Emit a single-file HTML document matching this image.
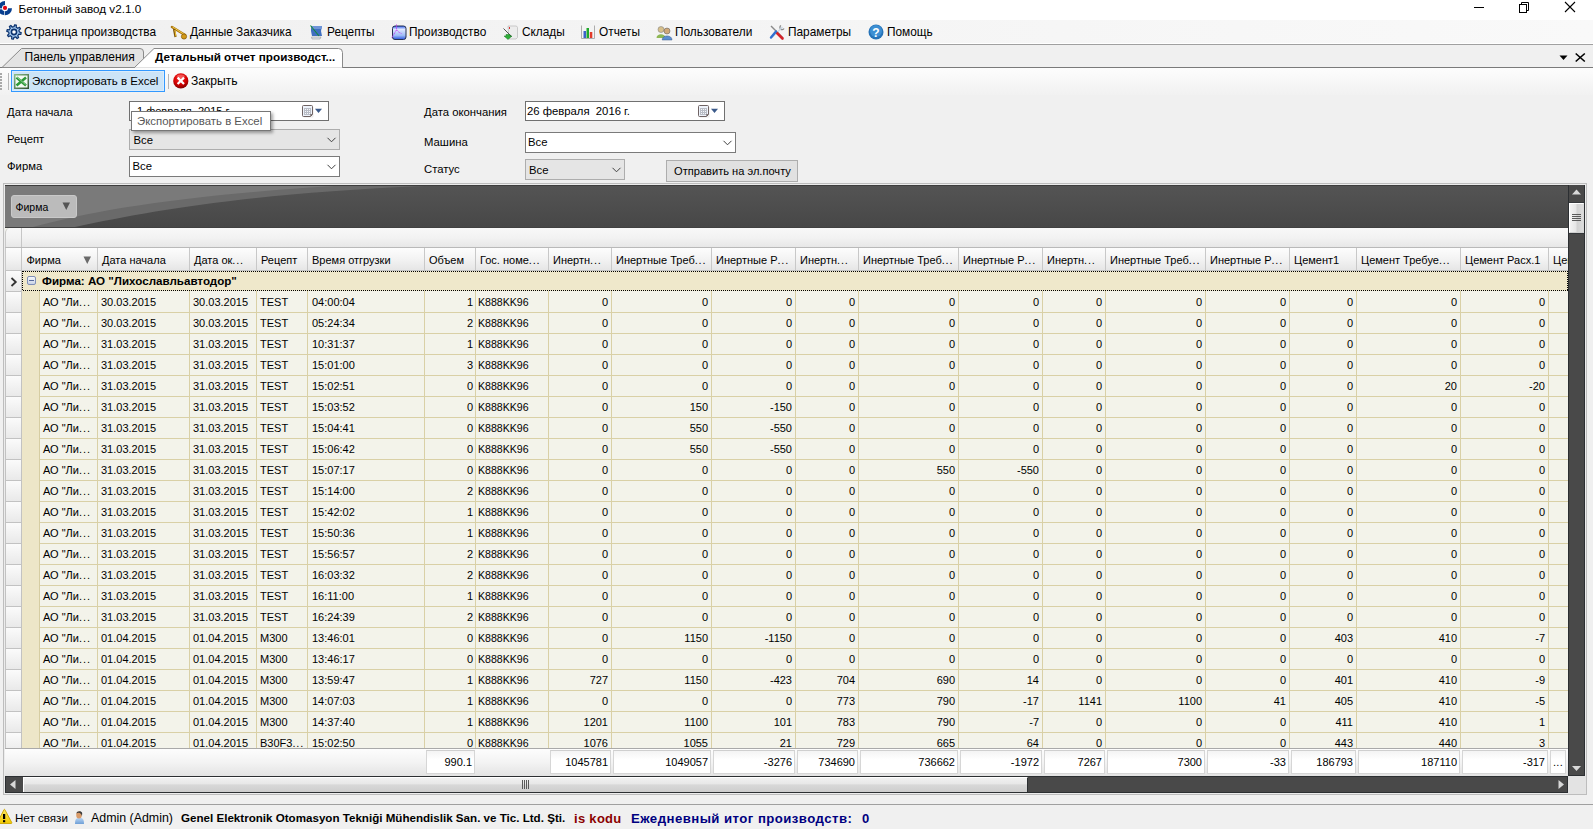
<!DOCTYPE html><html><head><meta charset="utf-8"><style>
html,body{margin:0;padding:0;}
body{width:1593px;height:829px;overflow:hidden;position:relative;background:#f0f0f0;font-family:"Liberation Sans", sans-serif;}
.t{position:absolute;white-space:pre;line-height:1;}
.b{position:absolute;box-sizing:border-box;}
svg{position:absolute;overflow:visible;}

</style></head><body>
<div class="b" style="left:0px;top:0px;width:1593px;height:20px;background:#fff"></div>
<svg style="left:0;top:0" width="14" height="17" viewBox="0 0 14 17">
<path d="M5 1 A7 7 0 0 0 -2 8 L2 8 A3 3 0 0 1 5 5 Z" fill="#083f8f"/>
<path d="M12 8.2 A7 7 0 0 1 5 15.2 L5 11.2 A3 3 0 0 0 8 8.2 Z" fill="#083f8f"/>
<path d="M4 15.1 A7 7 0 0 1 -2 9.2 L2 9.2 A3 3 0 0 0 4 11 Z" fill="#083f8f"/>
<rect x="0" y="8" width="2" height="1.2" fill="#a9bcd6"/><rect x="4" y="11" width="1" height="4.2" fill="#a9bcd6"/>
<circle cx="5" cy="7.9" r="2.1" fill="#e30613"/>
</svg>
<div class="t" style="left:18.5px;top:3px;font-size:11.7px;font-weight:400;color:#000;">Бетонный завод v2.1.0</div>
<div class="b" style="left:1474px;top:7px;width:10px;height:1px;background:#000"></div>
<svg style="left:1518px;top:1px" width="12" height="12"><rect x="1.5" y="3.5" width="7" height="8" fill="none" stroke="#000" stroke-width="1"/><path d="M3.5 3.5 V1.5 H10.5 V9.5 H8.5" fill="none" stroke="#000" stroke-width="1"/></svg>
<svg style="left:1564px;top:1px" width="12" height="12"><path d="M1 1 L11 11 M11 1 L1 11" stroke="#000" stroke-width="1.1"/></svg>
<div class="b" style="left:0px;top:20px;width:1593px;height:24px;background:linear-gradient(90deg,#f0f0f0,#f9f9f9)"></div>
<div class="b" style="left:0px;top:43px;width:1593px;height:1px;background:#ffffff"></div>
<div class="b" style="left:0px;top:44px;width:1593px;height:1px;background:#a0a0a0"></div>
<div class="t" style="left:24px;top:27px;font-size:11.85px;font-weight:400;color:#000;">Страница производства</div>
<div class="t" style="left:190px;top:27px;font-size:11.85px;font-weight:400;color:#000;">Данные Заказчика</div>
<div class="t" style="left:327px;top:27px;font-size:11.85px;font-weight:400;color:#000;">Рецепты</div>
<div class="t" style="left:409px;top:27px;font-size:11.85px;font-weight:400;color:#000;">Производство</div>
<div class="t" style="left:522px;top:27px;font-size:11.85px;font-weight:400;color:#000;">Склады</div>
<div class="t" style="left:599px;top:27px;font-size:11.85px;font-weight:400;color:#000;">Отчеты</div>
<div class="t" style="left:675px;top:27px;font-size:11.85px;font-weight:400;color:#000;">Пользователи</div>
<div class="t" style="left:788px;top:27px;font-size:11.85px;font-weight:400;color:#000;">Параметры</div>
<div class="t" style="left:887px;top:27px;font-size:11.85px;font-weight:400;color:#000;">Помощь</div>
<svg style="left:6px;top:24px" width="16" height="16" viewBox="0 0 16 16">
<path d="M13.30 8.00 L15.17 8.68 L14.81 10.33 L12.83 10.18 L11.75 11.75 L12.59 13.55 L11.17 14.47 L9.87 12.96 L8.00 13.30 L7.32 15.17 L5.67 14.81 L5.82 12.83 L4.25 11.75 L2.45 12.59 L1.53 11.17 L3.04 9.87 L2.70 8.00 L0.83 7.32 L1.19 5.67 L3.17 5.82 L4.25 4.25 L3.41 2.45 L4.83 1.53 L6.13 3.04 L8.00 2.70 L8.68 0.83 L10.33 1.19 L10.18 3.17 L11.75 4.25 L13.55 3.41 L14.47 4.83 L12.96 6.13 Z" fill="#a8cdf3" stroke="#0d3470" stroke-width="1.3" stroke-linejoin="round"/>
<circle cx="8" cy="8" r="2.6" fill="#fff" stroke="#0d3470" stroke-width="1.6"/>
</svg>
<svg style="left:171px;top:25px" width="16" height="16" viewBox="0 0 16 16">
<path d="M1 2 L14 10" stroke="#a8730f" stroke-width="2.6" stroke-linecap="round"/><path d="M1.5 2 L13.5 9.5" stroke="#f5d04a" stroke-width="1"/>
<path d="M3 4 L4.5 12" stroke="#7a520a" stroke-width="2.2"/><path d="M3.8 5 L5 11.5" stroke="#f2c230" stroke-width="1"/>
<circle cx="13" cy="11.5" r="2.6" fill="#d39a18" stroke="#8a5e0c" stroke-width="0.8"/>
</svg>
<svg style="left:310px;top:25px" width="14" height="15" viewBox="0 0 14 15">
<path d="M1 1 L12 1 L11 6 L12 11 L2 11 L1 6 Z" fill="#3f6fc0"/><path d="M1 1 L12 1 L11.5 4 L2 4 Z" fill="#6d94d8"/>
<path d="M1.5 12 L11 12 L10 14 L2 14 Z" fill="#dfe3ea" stroke="#888" stroke-width="0.5"/>
<path d="M0.5 0.5 L9 11" stroke="#138a3a" stroke-width="1.1"/>
</svg>
<svg style="left:391px;top:24px" width="16" height="17" viewBox="0 0 16 17">
<defs><linearGradient id="pg" x1="0" y1="0" x2="0" y2="1"><stop offset="0" stop-color="#2a5cf0"/><stop offset="0.25" stop-color="#dfe8ff"/><stop offset="0.7" stop-color="#9dbbf5"/><stop offset="1" stop-color="#2a55e0"/></linearGradient></defs>
<rect x="1.5" y="2" width="13.5" height="13.5" rx="2.5" fill="url(#pg)" stroke="#27314f" stroke-width="1"/>
<path d="M5.5 0.5 V5 Q6.5 8 10.5 9.5 M5.5 6 L0.5 14" stroke="#c437f0" stroke-width="0.9" stroke-dasharray="1.2 0.6" fill="none"/>
</svg>
<svg style="left:503px;top:25px" width="16" height="16" viewBox="0 0 16 16">
<path d="M5 1 L13.5 1 L14.5 2.5 L14.5 12.5 L13 14 L6 14 Z" fill="#ececec" stroke="#b9b9b9" stroke-width="0.7"/>
<path d="M0.5 3.5 L8.5 11.5" stroke="#555" stroke-width="1"/>
<path d="M3 9.5 L7 9.5 L7 11 L9 11 L5 14.5 L1 11 L3 11 Z" fill="#2fae3a" stroke="#1b7a22" stroke-width="0.5"/>
<rect x="6" y="2" width="1" height="2" fill="#d33"/>
</svg>
<svg style="left:581px;top:25px" width="14" height="15" viewBox="0 0 14 15">
<path d="M0.5 0.5 L0.5 13.5 L13.5 13.5 M13.5 0.5 L13.5 13.5" stroke="#999" stroke-width="0.8" fill="none"/>
<rect x="2.5" y="6" width="2.5" height="7" fill="#3a62c9"/><rect x="5.5" y="3" width="2.5" height="10" fill="#1fa82a"/><rect x="8.8" y="7" width="2.5" height="6" fill="#e23a2a"/>
</svg>
<svg style="left:656px;top:25px" width="17" height="16" viewBox="0 0 17 16">
<circle cx="5" cy="4.5" r="3" fill="#d7c08b" stroke="#777" stroke-width="0.5"/><path d="M0.5 13 C0.5 8 9.5 8 9.5 13 Z" fill="#8fb856"/>
<circle cx="11" cy="6" r="3" fill="#d0a878" stroke="#555" stroke-width="0.5"/><path d="M6.2 15 C6.2 9.5 16 9.5 16 15 Z" fill="#5b8fd0" stroke="#3d5c8f" stroke-width="0.5"/>
</svg>
<svg style="left:769px;top:24px" width="17" height="17" viewBox="0 0 17 17">
<path d="M2 2 L14 14" stroke="#8a8a8a" stroke-width="1.4"/><path d="M12 1.5 A2.2 2.2 0 1 0 15 4.5" stroke="#8a8a8a" stroke-width="1.3" fill="none"/>
<path d="M13.5 3 L3 13.5" stroke="#c9d7e6" stroke-width="1.2"/>
<path d="M8 9 L13.5 14.5" stroke="#d4232a" stroke-width="2.6" stroke-linecap="round"/>
<path d="M7 7.5 L2 13.5" stroke="#2f6fd0" stroke-width="2.4" stroke-linecap="round"/>
</svg>
<svg style="left:868px;top:24px" width="16" height="16" viewBox="0 0 16 16">
<circle cx="8" cy="8" r="7.5" fill="#2673b8"/><circle cx="8" cy="7" r="6" fill="#3d8fd3"/>
<text x="8" y="12.5" font-family="Liberation Sans" font-weight="700" font-size="12" fill="#fff" text-anchor="middle">?</text>
</svg>
<div class="b" style="left:0px;top:67px;width:1593px;height:1px;background:#7a7a7a"></div>
<svg style="left:0;top:45px" width="360" height="24" viewBox="0 0 360 24">
<path d="M2 22.5 L21.5 3.5 L140 3.5 Q143.5 3.5 143.5 7 L143.5 22.5 Z" fill="#e3e3e3" stroke="#8a8a8a" stroke-width="1"/>
<path d="M134 23 L154 3.5 L338.5 3.5 Q342.5 3.5 342.5 7.5 L342.5 23 Z" fill="#fff" stroke="#8a8a8a" stroke-width="1"/>
<rect x="135" y="22.5" width="207" height="2" fill="#fff"/>
</svg>
<div class="t" style="left:24.5px;top:51px;font-size:12.0px;font-weight:400;color:#000;">Панель управления</div>
<div class="t" style="left:155px;top:51px;font-size:11.7px;font-weight:700;color:#000;">Детальный отчет производст...</div>
<svg style="left:1559px;top:55px" width="10" height="6"><path d="M0.5 0.5 L8.5 0.5 L4.5 5 Z" fill="#000"/></svg>
<svg style="left:1575px;top:53px" width="11" height="9"><path d="M0.7 0.5 L9.8 8.5 M9.8 0.5 L0.7 8.5" stroke="#000" stroke-width="1.6"/></svg>
<div class="b" style="left:0px;top:68px;width:1593px;height:27px;background:linear-gradient(#fdfdfd,#f1f1f1)"></div>
<div class="b" style="left:0px;top:73px;width:2px;height:2px;background:#a9a9a9"></div>
<div class="b" style="left:0px;top:76px;width:2px;height:2px;background:#a9a9a9"></div>
<div class="b" style="left:0px;top:79px;width:2px;height:2px;background:#a9a9a9"></div>
<div class="b" style="left:0px;top:82px;width:2px;height:2px;background:#a9a9a9"></div>
<div class="b" style="left:0px;top:85px;width:2px;height:2px;background:#a9a9a9"></div>
<div class="b" style="left:0px;top:88px;width:2px;height:2px;background:#a9a9a9"></div>
<div class="b" style="left:8px;top:73px;width:1px;height:17px;background:#b8b8b8"></div>
<div class="b" style="left:11px;top:70px;width:154px;height:22px;background:#cce4f7;border:1px solid #3399ff"></div>
<div class="b" style="left:12px;top:71px;width:152px;height:20px;border:1px solid #daecfb"></div>
<svg style="left:14px;top:74px" width="16" height="16" viewBox="0 0 16 16">
<defs><linearGradient id="xb" x1="0" y1="0" x2="1" y2="1"><stop offset="0" stop-color="#8cc08c"/><stop offset="1" stop-color="#2f4f2f"/></linearGradient></defs>
<rect x="0" y="0" width="15" height="15" fill="url(#xb)"/>
<rect x="1.5" y="1.5" width="12" height="12" fill="#f4faf4"/>
<path d="M2.5 3.5 L12 11.5 M12 3.5 L2.5 11.5" stroke="#2e9a3a" stroke-width="2.6"/>
<path d="M3 3.2 L11.5 10.5" stroke="#9ed69e" stroke-width="0.8"/>
</svg>
<div class="t" style="left:32px;top:76px;font-size:11.5px;font-weight:400;color:#000;">Экспортировать в Excel</div>
<div class="b" style="left:168px;top:74px;width:1px;height:15px;background:#b5b5b5"></div>
<svg style="left:172.5px;top:73px" width="16" height="16" viewBox="0 0 16 16">
<defs><radialGradient id="rg" cx="0.45" cy="0.3" r="0.75"><stop offset="0" stop-color="#ff2a2a"/><stop offset="0.6" stop-color="#d00000"/><stop offset="1" stop-color="#700000"/></radialGradient></defs>
<circle cx="7.8" cy="7.9" r="7.6" fill="url(#rg)"/>
<ellipse cx="7.8" cy="3.5" rx="4" ry="2" fill="#fff" opacity="0.25"/>
<path d="M4.6 4.6 L11 11 M11 4.6 L4.6 11" stroke="#fff" stroke-width="2.2"/>
</svg>
<div class="t" style="left:191px;top:75px;font-size:12.1px;font-weight:400;color:#000;">Закрыть</div>
<div class="t" style="left:7px;top:107px;font-size:11.3px;font-weight:400;color:#000;">Дата начала</div>
<div class="t" style="left:7px;top:134px;font-size:11.3px;font-weight:400;color:#000;">Рецепт</div>
<div class="t" style="left:7px;top:161px;font-size:11.3px;font-weight:400;color:#000;">Фирма</div>
<div class="t" style="left:424px;top:107px;font-size:11.3px;font-weight:400;color:#000;">Дата окончания</div>
<div class="t" style="left:424px;top:137px;font-size:11.3px;font-weight:400;color:#000;">Машина</div>
<div class="t" style="left:424px;top:164px;font-size:11.3px;font-weight:400;color:#000;">Статус</div>
<div class="b" style="left:129px;top:101px;width:200px;height:20px;background:#fff;border:1px solid #707070"></div>
<div class="t" style="left:137px;top:106px;font-size:11px;font-weight:400;color:#000;">1 февраля  2015 г.</div>
<svg style="left:302px;top:105px" width="22" height="14" viewBox="0 0 22 14">
<rect x="1.5" y="1.5" width="10" height="11" rx="1" fill="#000" opacity="0.08"/>
<path d="M1.5 0.5 H9.5 Q10.5 0.5 10.5 1.5 V9.5 L8.5 11.5 H1.5 Q0.5 11.5 0.5 10.5 V1.5 Q0.5 0.5 1.5 0.5 Z" fill="#eef3fb" stroke="#6f6363" stroke-width="1"/>
<rect x="2" y="3" width="7" height="7" fill="#b9bdc6"/>
<rect x="3" y="4" width="1" height="1" fill="#f4f6fa"/><rect x="5" y="4" width="1" height="1" fill="#f4f6fa"/><rect x="7" y="4" width="1" height="1" fill="#f4f6fa"/><rect x="3" y="6" width="1" height="1" fill="#f4f6fa"/><rect x="5" y="6" width="1" height="1" fill="#f4f6fa"/><rect x="7" y="6" width="1" height="1" fill="#f4f6fa"/><rect x="3" y="8" width="1" height="1" fill="#f4f6fa"/><rect x="5" y="8" width="1" height="1" fill="#f4f6fa"/><rect x="7" y="8" width="1" height="1" fill="#f4f6fa"/>
<path d="M8 11.5 L10.5 9 L8.5 9 Z" fill="#6f6363"/>
<path d="M13 3.8 L20 3.8 L16.5 8 Z" fill="#3b5a8a"/>
</svg>
<div class="b" style="left:525px;top:101px;width:200px;height:20px;background:#fff;border:1px solid #707070"></div>
<div class="t" style="left:527px;top:106px;font-size:11.3px;font-weight:400;color:#000;">26 февраля  2016 г.</div>
<svg style="left:698px;top:105px" width="22" height="14" viewBox="0 0 22 14">
<rect x="1.5" y="1.5" width="10" height="11" rx="1" fill="#000" opacity="0.08"/>
<path d="M1.5 0.5 H9.5 Q10.5 0.5 10.5 1.5 V9.5 L8.5 11.5 H1.5 Q0.5 11.5 0.5 10.5 V1.5 Q0.5 0.5 1.5 0.5 Z" fill="#eef3fb" stroke="#6f6363" stroke-width="1"/>
<rect x="2" y="3" width="7" height="7" fill="#b9bdc6"/>
<rect x="3" y="4" width="1" height="1" fill="#f4f6fa"/><rect x="5" y="4" width="1" height="1" fill="#f4f6fa"/><rect x="7" y="4" width="1" height="1" fill="#f4f6fa"/><rect x="3" y="6" width="1" height="1" fill="#f4f6fa"/><rect x="5" y="6" width="1" height="1" fill="#f4f6fa"/><rect x="7" y="6" width="1" height="1" fill="#f4f6fa"/><rect x="3" y="8" width="1" height="1" fill="#f4f6fa"/><rect x="5" y="8" width="1" height="1" fill="#f4f6fa"/><rect x="7" y="8" width="1" height="1" fill="#f4f6fa"/>
<path d="M8 11.5 L10.5 9 L8.5 9 Z" fill="#6f6363"/>
<path d="M13 3.8 L20 3.8 L16.5 8 Z" fill="#3b5a8a"/>
</svg>
<div class="b" style="left:129px;top:129px;width:211px;height:21px;background:#e5e5e5;border:1px solid #adadad"></div>
<div class="t" style="left:133.5px;top:135px;font-size:11.3px;font-weight:400;color:#000;">Все</div>
<svg style="left:327px;top:137px" width="10" height="6"><path d="M0.5 0.8 L4.5 4.8 L8.5 0.8" fill="none" stroke="#404040" stroke-width="1"/></svg>
<div class="b" style="left:129px;top:156px;width:211px;height:21px;background:#fff;border:1px solid #7a7a7a"></div>
<div class="t" style="left:132.5px;top:161px;font-size:11.3px;font-weight:400;color:#000;">Все</div>
<svg style="left:327px;top:164px" width="10" height="6"><path d="M0.5 0.8 L4.5 4.8 L8.5 0.8" fill="none" stroke="#404040" stroke-width="1"/></svg>
<div class="b" style="left:525px;top:132px;width:211px;height:21px;background:#fff;border:1px solid #7a7a7a"></div>
<div class="t" style="left:528px;top:137px;font-size:11.3px;font-weight:400;color:#000;">Все</div>
<svg style="left:723px;top:140px" width="10" height="6"><path d="M0.5 0.8 L4.5 4.8 L8.5 0.8" fill="none" stroke="#404040" stroke-width="1"/></svg>
<div class="b" style="left:525px;top:159px;width:100px;height:21px;background:#e5e5e5;border:1px solid #adadad"></div>
<div class="t" style="left:529px;top:165px;font-size:11.3px;font-weight:400;color:#000;">Все</div>
<svg style="left:612px;top:167px" width="10" height="6"><path d="M0.5 0.8 L4.5 4.8 L8.5 0.8" fill="none" stroke="#404040" stroke-width="1"/></svg>
<div class="b" style="left:666px;top:160px;width:132px;height:22px;background:#e1e1e1;border:1px solid #adadad"></div>
<div class="t" style="left:674px;top:166px;font-size:11.1px;font-weight:400;color:#000;">Отправить на эл.почту</div>
<div class="b" style="left:131px;top:111px;width:140px;height:20px;background:#fff;border:1px solid #767676;box-shadow:2px 2px 3px rgba(0,0,0,0.35)"></div>
<div class="t" style="left:137px;top:116px;font-size:11.4px;font-weight:400;color:#575757;">Экспортировать в Excel</div>
<div class="b" style="left:3px;top:183px;width:1584px;height:612px;border:1px solid #bdbdbd;background:#f0f0f0"></div>
<div class="b" style="left:4px;top:184px;width:1582px;height:610px;background:#ececec"></div>
<div class="b" style="left:5px;top:185px;width:1563px;height:43px;background:linear-gradient(#545454,#474747);border-top:1px solid #3e3e3e;border-bottom:1px solid #404040"></div>
<svg style="left:5px;top:185px" width="1563" height="43" viewBox="0 0 1563 43">
<path d="M0 1 L420 1 C250 8 150 25 70 42 L0 42 Z" fill="#6a6a6a"/>
<path d="M0 1 L330 1 C180 10 90 25 28 42 L0 42 Z" fill="#7a7a7a"/>
</svg>
<div class="b" style="left:11px;top:195px;width:66px;height:23px;background:#bbbbbb;border:1px solid #c9c9c9;border-radius:3px"></div>
<div class="t" style="left:15.5px;top:202px;font-size:10.5px;font-weight:400;color:#000;">Фирма</div>
<svg style="left:62px;top:202px" width="9" height="9"><path d="M0.5 0.5 L8 0.5 L4.25 8 Z" fill="#555"/></svg>
<div class="b" style="left:1568px;top:185px;width:17px;height:591px;background:#494949;border:1px solid #2c2f32;border-top:none"></div>
<svg style="left:1571px;top:188px" width="12" height="8"><path d="M1 6.5 L5.5 1.5 L10 6.5 Z" fill="#d8d8d8"/></svg>
<div class="b" style="left:1569px;top:202px;width:15px;height:1px;background:#35383b"></div>
<div class="b" style="left:1569px;top:203px;width:15px;height:30px;background:linear-gradient(90deg,#f3f3f3,#e6e6e6 45%,#d2d2d2 55%,#dcdcdc);border:1px solid #fff;border-right-color:#d8d8d8;border-bottom-color:#d0d0d0"></div>
<div class="b" style="left:1569px;top:233px;width:15px;height:1px;background:#35383b"></div>
<div class="b" style="left:1572px;top:214px;width:9px;height:1px;background:#5a5a5a"></div>
<div class="b" style="left:1572px;top:216px;width:9px;height:1px;background:#5a5a5a"></div>
<div class="b" style="left:1572px;top:218px;width:9px;height:1px;background:#5a5a5a"></div>
<div class="b" style="left:1572px;top:220px;width:9px;height:1px;background:#5a5a5a"></div>
<svg style="left:1571px;top:765px" width="12" height="8"><path d="M1 1 L10 1 L5.5 6 Z" fill="#d8d8d8"/></svg>
<div class="b" style="left:5px;top:228px;width:1563px;height:548px;overflow:hidden;background:#f3f3ea">
<div class="b" style="left:0px;top:0px;width:1563px;height:20px;background:linear-gradient(#f8f8f8,#f2f2f2 50%,#e6e6e6);border-top-left-radius:5px;border-left:1px solid #c9c9c9"></div>
<div class="b" style="left:16px;top:0px;width:1px;height:20px;background:#c6c6c6"></div>
<div class="b" style="left:0px;top:19px;width:1563px;height:1px;background:#b9b9b9"></div>
<div class="b" style="left:0px;top:20px;width:1563px;height:22px;background:linear-gradient(#fdfdfd,#f3f3f3 50%,#e6e6e6)"></div>
<div class="b" style="left:0px;top:20px;width:1px;height:22px;background:#c9c9c9"></div>
<div class="b" style="left:16px;top:20px;width:1px;height:22px;background:#c6c6c6"></div>
<div class="b" style="left:92px;top:20px;width:1px;height:22px;background:#c8c8c8"></div>
<div class="t" style="left:21.5px;top:27px;font-size:11px;font-weight:400;color:#000;">Фирма</div>
<div class="b" style="left:184px;top:20px;width:1px;height:22px;background:#c8c8c8"></div>
<div class="t" style="left:97px;top:27px;font-size:11px;font-weight:400;color:#000;">Дата начала</div>
<div class="b" style="left:251px;top:20px;width:1px;height:22px;background:#c8c8c8"></div>
<div class="t" style="left:189px;top:27px;font-size:11px;font-weight:400;color:#000;">Дата ок<span style="letter-spacing:0.8px">...</span></div>
<div class="b" style="left:302px;top:20px;width:1px;height:22px;background:#c8c8c8"></div>
<div class="t" style="left:256px;top:27px;font-size:11px;font-weight:400;color:#000;">Рецепт</div>
<div class="b" style="left:419px;top:20px;width:1px;height:22px;background:#c8c8c8"></div>
<div class="t" style="left:307px;top:27px;font-size:11px;font-weight:400;color:#000;">Время отгрузки</div>
<div class="b" style="left:470px;top:20px;width:1px;height:22px;background:#c8c8c8"></div>
<div class="t" style="left:424px;top:27px;font-size:11px;font-weight:400;color:#000;">Объем</div>
<div class="b" style="left:543px;top:20px;width:1px;height:22px;background:#c8c8c8"></div>
<div class="t" style="left:475px;top:27px;font-size:11px;font-weight:400;color:#000;">Гос. номе<span style="letter-spacing:0.8px">...</span></div>
<div class="b" style="left:606px;top:20px;width:1px;height:22px;background:#c8c8c8"></div>
<div class="t" style="left:548px;top:27px;font-size:11px;font-weight:400;color:#000;">Инертн<span style="letter-spacing:0.8px">...</span></div>
<div class="b" style="left:706px;top:20px;width:1px;height:22px;background:#c8c8c8"></div>
<div class="t" style="left:611px;top:27px;font-size:11px;font-weight:400;color:#000;">Инертные Треб<span style="letter-spacing:0.8px">...</span></div>
<div class="b" style="left:790px;top:20px;width:1px;height:22px;background:#c8c8c8"></div>
<div class="t" style="left:711px;top:27px;font-size:11px;font-weight:400;color:#000;">Инертные Р<span style="letter-spacing:0.8px">...</span></div>
<div class="b" style="left:853px;top:20px;width:1px;height:22px;background:#c8c8c8"></div>
<div class="t" style="left:795px;top:27px;font-size:11px;font-weight:400;color:#000;">Инертн<span style="letter-spacing:0.8px">...</span></div>
<div class="b" style="left:953px;top:20px;width:1px;height:22px;background:#c8c8c8"></div>
<div class="t" style="left:858px;top:27px;font-size:11px;font-weight:400;color:#000;">Инертные Треб<span style="letter-spacing:0.8px">...</span></div>
<div class="b" style="left:1037px;top:20px;width:1px;height:22px;background:#c8c8c8"></div>
<div class="t" style="left:958px;top:27px;font-size:11px;font-weight:400;color:#000;">Инертные Р<span style="letter-spacing:0.8px">...</span></div>
<div class="b" style="left:1100px;top:20px;width:1px;height:22px;background:#c8c8c8"></div>
<div class="t" style="left:1042px;top:27px;font-size:11px;font-weight:400;color:#000;">Инертн<span style="letter-spacing:0.8px">...</span></div>
<div class="b" style="left:1200px;top:20px;width:1px;height:22px;background:#c8c8c8"></div>
<div class="t" style="left:1105px;top:27px;font-size:11px;font-weight:400;color:#000;">Инертные Треб<span style="letter-spacing:0.8px">...</span></div>
<div class="b" style="left:1284px;top:20px;width:1px;height:22px;background:#c8c8c8"></div>
<div class="t" style="left:1205px;top:27px;font-size:11px;font-weight:400;color:#000;">Инертные Р<span style="letter-spacing:0.8px">...</span></div>
<div class="b" style="left:1351px;top:20px;width:1px;height:22px;background:#c8c8c8"></div>
<div class="t" style="left:1289px;top:27px;font-size:11px;font-weight:400;color:#000;">Цемент1</div>
<div class="b" style="left:1455px;top:20px;width:1px;height:22px;background:#c8c8c8"></div>
<div class="t" style="left:1356px;top:27px;font-size:11px;font-weight:400;color:#000;">Цемент Требуе<span style="letter-spacing:0.8px">...</span></div>
<div class="b" style="left:1543px;top:20px;width:1px;height:22px;background:#c8c8c8"></div>
<div class="t" style="left:1460px;top:27px;font-size:11px;font-weight:400;color:#000;">Цемент Расх.1</div>
<div class="b" style="left:1635px;top:20px;width:1px;height:22px;background:#c8c8c8"></div>
<div class="t" style="left:1548px;top:27px;font-size:11px;font-weight:400;color:#000;">Цемент</div>
<svg style="left:78px;top:28px" width="9" height="9"><path d="M0.5 0.5 L8 0.5 L4.25 8 Z" fill="#6a6a6a"/></svg>
<div class="b" style="left:0px;top:42px;width:1563px;height:1px;background:#c4c4c4"></div>
<div class="b" style="left:1px;top:43px;width:15px;height:20px;background:linear-gradient(#fbfbfb,#e9e9e9)"></div>
<div class="b" style="left:1px;top:63px;width:15px;height:1px;background:#c2c2c2"></div>
<div class="b" style="left:1px;top:64px;width:15px;height:20px;background:linear-gradient(#fbfbfb,#e9e9e9)"></div>
<div class="b" style="left:1px;top:84px;width:15px;height:1px;background:#c2c2c2"></div>
<div class="b" style="left:1px;top:85px;width:15px;height:20px;background:linear-gradient(#fbfbfb,#e9e9e9)"></div>
<div class="b" style="left:1px;top:105px;width:15px;height:1px;background:#c2c2c2"></div>
<div class="b" style="left:1px;top:106px;width:15px;height:20px;background:linear-gradient(#fbfbfb,#e9e9e9)"></div>
<div class="b" style="left:1px;top:126px;width:15px;height:1px;background:#c2c2c2"></div>
<div class="b" style="left:1px;top:127px;width:15px;height:20px;background:linear-gradient(#fbfbfb,#e9e9e9)"></div>
<div class="b" style="left:1px;top:147px;width:15px;height:1px;background:#c2c2c2"></div>
<div class="b" style="left:1px;top:148px;width:15px;height:20px;background:linear-gradient(#fbfbfb,#e9e9e9)"></div>
<div class="b" style="left:1px;top:168px;width:15px;height:1px;background:#c2c2c2"></div>
<div class="b" style="left:1px;top:169px;width:15px;height:20px;background:linear-gradient(#fbfbfb,#e9e9e9)"></div>
<div class="b" style="left:1px;top:189px;width:15px;height:1px;background:#c2c2c2"></div>
<div class="b" style="left:1px;top:190px;width:15px;height:20px;background:linear-gradient(#fbfbfb,#e9e9e9)"></div>
<div class="b" style="left:1px;top:210px;width:15px;height:1px;background:#c2c2c2"></div>
<div class="b" style="left:1px;top:211px;width:15px;height:20px;background:linear-gradient(#fbfbfb,#e9e9e9)"></div>
<div class="b" style="left:1px;top:231px;width:15px;height:1px;background:#c2c2c2"></div>
<div class="b" style="left:1px;top:232px;width:15px;height:20px;background:linear-gradient(#fbfbfb,#e9e9e9)"></div>
<div class="b" style="left:1px;top:252px;width:15px;height:1px;background:#c2c2c2"></div>
<div class="b" style="left:1px;top:253px;width:15px;height:20px;background:linear-gradient(#fbfbfb,#e9e9e9)"></div>
<div class="b" style="left:1px;top:273px;width:15px;height:1px;background:#c2c2c2"></div>
<div class="b" style="left:1px;top:274px;width:15px;height:20px;background:linear-gradient(#fbfbfb,#e9e9e9)"></div>
<div class="b" style="left:1px;top:294px;width:15px;height:1px;background:#c2c2c2"></div>
<div class="b" style="left:1px;top:295px;width:15px;height:20px;background:linear-gradient(#fbfbfb,#e9e9e9)"></div>
<div class="b" style="left:1px;top:315px;width:15px;height:1px;background:#c2c2c2"></div>
<div class="b" style="left:1px;top:316px;width:15px;height:20px;background:linear-gradient(#fbfbfb,#e9e9e9)"></div>
<div class="b" style="left:1px;top:336px;width:15px;height:1px;background:#c2c2c2"></div>
<div class="b" style="left:1px;top:337px;width:15px;height:20px;background:linear-gradient(#fbfbfb,#e9e9e9)"></div>
<div class="b" style="left:1px;top:357px;width:15px;height:1px;background:#c2c2c2"></div>
<div class="b" style="left:1px;top:358px;width:15px;height:20px;background:linear-gradient(#fbfbfb,#e9e9e9)"></div>
<div class="b" style="left:1px;top:378px;width:15px;height:1px;background:#c2c2c2"></div>
<div class="b" style="left:1px;top:379px;width:15px;height:20px;background:linear-gradient(#fbfbfb,#e9e9e9)"></div>
<div class="b" style="left:1px;top:399px;width:15px;height:1px;background:#c2c2c2"></div>
<div class="b" style="left:1px;top:400px;width:15px;height:20px;background:linear-gradient(#fbfbfb,#e9e9e9)"></div>
<div class="b" style="left:1px;top:420px;width:15px;height:1px;background:#c2c2c2"></div>
<div class="b" style="left:1px;top:421px;width:15px;height:20px;background:linear-gradient(#fbfbfb,#e9e9e9)"></div>
<div class="b" style="left:1px;top:441px;width:15px;height:1px;background:#c2c2c2"></div>
<div class="b" style="left:1px;top:442px;width:15px;height:20px;background:linear-gradient(#fbfbfb,#e9e9e9)"></div>
<div class="b" style="left:1px;top:462px;width:15px;height:1px;background:#c2c2c2"></div>
<div class="b" style="left:1px;top:463px;width:15px;height:20px;background:linear-gradient(#fbfbfb,#e9e9e9)"></div>
<div class="b" style="left:1px;top:483px;width:15px;height:1px;background:#c2c2c2"></div>
<div class="b" style="left:1px;top:484px;width:15px;height:20px;background:linear-gradient(#fbfbfb,#e9e9e9)"></div>
<div class="b" style="left:1px;top:504px;width:15px;height:1px;background:#c2c2c2"></div>
<div class="b" style="left:1px;top:505px;width:15px;height:20px;background:linear-gradient(#fbfbfb,#e9e9e9)"></div>
<div class="b" style="left:1px;top:525px;width:15px;height:1px;background:#c2c2c2"></div>
<div class="b" style="left:0px;top:43px;width:1px;height:480px;background:#c2c2c2"></div>
<div class="b" style="left:16px;top:43px;width:1px;height:480px;background:#c2c2c2"></div>
<svg style="left:5px;top:49px" width="8" height="10"><path d="M1.5 1 L5.8 5 L1.5 9" fill="none" stroke="#333" stroke-width="1.8"/></svg>
<div class="b" style="left:17px;top:43px;width:1546px;height:20px;background:#efe8cb"></div>
<div class="b" style="left:17px;top:62px;width:1546px;height:1px;background:repeating-linear-gradient(90deg,transparent 0 1px,#000 1px 2px)"></div>
<div class="b" style="left:17px;top:43px;width:1546px;height:1px;background:repeating-linear-gradient(90deg,transparent 0 1px,#000 1px 2px)"></div>
<div class="b" style="left:17px;top:43px;width:1px;height:20px;background:repeating-linear-gradient(#000 0 1px,transparent 1px 2px)"></div>
<div class="b" style="left:1562px;top:43px;width:1px;height:20px;background:repeating-linear-gradient(#000 0 1px,transparent 1px 2px)"></div>
<div class="b" style="left:22px;top:48px;width:9px;height:9px;background:linear-gradient(#f4f6fb,#dfe5f1 50%,#c9d2e6);border:1px solid #7f8fb8;border-radius:2px"></div>
<div class="b" style="left:24px;top:52px;width:5px;height:1px;background:#56689a"></div>
<div class="t" style="left:37px;top:47px;font-size:11.6px;font-weight:700;color:#000;">Фирма: АО &quot;Лихославльавтодор&quot;</div>
<div class="b" style="left:17px;top:63px;width:18px;height:460px;background:#ede6c8"></div>
<div class="b" style="left:35px;top:84px;width:1528px;height:1px;background:#d9d0a6"></div>
<div class="t" style="left:38px;top:69px;font-size:11px;font-weight:400;color:#000;">АО &quot;Ли<span style="letter-spacing:1px">...</span></div>
<div class="t" style="left:96px;top:69px;font-size:11px;font-weight:400;color:#000;">30.03.2015</div>
<div class="t" style="left:188px;top:69px;font-size:11px;font-weight:400;color:#000;">30.03.2015</div>
<div class="t" style="left:255px;top:69px;font-size:11px;font-weight:400;color:#000;">TEST</div>
<div class="t" style="left:307px;top:69px;font-size:11px;font-weight:400;color:#000;">04:00:04</div>
<div class="t" style="right:1095px;top:69px;font-size:11px;font-weight:400;color:#000;">1</div>
<div class="t" style="left:473px;top:69px;font-size:10.6px;font-weight:400;color:#000;">K888KK96</div>
<div class="t" style="right:960px;top:69px;font-size:11px;font-weight:400;color:#000;">0</div>
<div class="t" style="right:860px;top:69px;font-size:11px;font-weight:400;color:#000;">0</div>
<div class="t" style="right:776px;top:69px;font-size:11px;font-weight:400;color:#000;">0</div>
<div class="t" style="right:713px;top:69px;font-size:11px;font-weight:400;color:#000;">0</div>
<div class="t" style="right:613px;top:69px;font-size:11px;font-weight:400;color:#000;">0</div>
<div class="t" style="right:529px;top:69px;font-size:11px;font-weight:400;color:#000;">0</div>
<div class="t" style="right:466px;top:69px;font-size:11px;font-weight:400;color:#000;">0</div>
<div class="t" style="right:366px;top:69px;font-size:11px;font-weight:400;color:#000;">0</div>
<div class="t" style="right:282px;top:69px;font-size:11px;font-weight:400;color:#000;">0</div>
<div class="t" style="right:215px;top:69px;font-size:11px;font-weight:400;color:#000;">0</div>
<div class="t" style="right:111px;top:69px;font-size:11px;font-weight:400;color:#000;">0</div>
<div class="t" style="right:23px;top:69px;font-size:11px;font-weight:400;color:#000;">0</div>
<div class="b" style="left:35px;top:105px;width:1528px;height:1px;background:#d9d0a6"></div>
<div class="t" style="left:38px;top:90px;font-size:11px;font-weight:400;color:#000;">АО &quot;Ли<span style="letter-spacing:1px">...</span></div>
<div class="t" style="left:96px;top:90px;font-size:11px;font-weight:400;color:#000;">30.03.2015</div>
<div class="t" style="left:188px;top:90px;font-size:11px;font-weight:400;color:#000;">30.03.2015</div>
<div class="t" style="left:255px;top:90px;font-size:11px;font-weight:400;color:#000;">TEST</div>
<div class="t" style="left:307px;top:90px;font-size:11px;font-weight:400;color:#000;">05:24:34</div>
<div class="t" style="right:1095px;top:90px;font-size:11px;font-weight:400;color:#000;">2</div>
<div class="t" style="left:473px;top:90px;font-size:10.6px;font-weight:400;color:#000;">K888KK96</div>
<div class="t" style="right:960px;top:90px;font-size:11px;font-weight:400;color:#000;">0</div>
<div class="t" style="right:860px;top:90px;font-size:11px;font-weight:400;color:#000;">0</div>
<div class="t" style="right:776px;top:90px;font-size:11px;font-weight:400;color:#000;">0</div>
<div class="t" style="right:713px;top:90px;font-size:11px;font-weight:400;color:#000;">0</div>
<div class="t" style="right:613px;top:90px;font-size:11px;font-weight:400;color:#000;">0</div>
<div class="t" style="right:529px;top:90px;font-size:11px;font-weight:400;color:#000;">0</div>
<div class="t" style="right:466px;top:90px;font-size:11px;font-weight:400;color:#000;">0</div>
<div class="t" style="right:366px;top:90px;font-size:11px;font-weight:400;color:#000;">0</div>
<div class="t" style="right:282px;top:90px;font-size:11px;font-weight:400;color:#000;">0</div>
<div class="t" style="right:215px;top:90px;font-size:11px;font-weight:400;color:#000;">0</div>
<div class="t" style="right:111px;top:90px;font-size:11px;font-weight:400;color:#000;">0</div>
<div class="t" style="right:23px;top:90px;font-size:11px;font-weight:400;color:#000;">0</div>
<div class="b" style="left:35px;top:126px;width:1528px;height:1px;background:#d9d0a6"></div>
<div class="t" style="left:38px;top:111px;font-size:11px;font-weight:400;color:#000;">АО &quot;Ли<span style="letter-spacing:1px">...</span></div>
<div class="t" style="left:96px;top:111px;font-size:11px;font-weight:400;color:#000;">31.03.2015</div>
<div class="t" style="left:188px;top:111px;font-size:11px;font-weight:400;color:#000;">31.03.2015</div>
<div class="t" style="left:255px;top:111px;font-size:11px;font-weight:400;color:#000;">TEST</div>
<div class="t" style="left:307px;top:111px;font-size:11px;font-weight:400;color:#000;">10:31:37</div>
<div class="t" style="right:1095px;top:111px;font-size:11px;font-weight:400;color:#000;">1</div>
<div class="t" style="left:473px;top:111px;font-size:10.6px;font-weight:400;color:#000;">K888KK96</div>
<div class="t" style="right:960px;top:111px;font-size:11px;font-weight:400;color:#000;">0</div>
<div class="t" style="right:860px;top:111px;font-size:11px;font-weight:400;color:#000;">0</div>
<div class="t" style="right:776px;top:111px;font-size:11px;font-weight:400;color:#000;">0</div>
<div class="t" style="right:713px;top:111px;font-size:11px;font-weight:400;color:#000;">0</div>
<div class="t" style="right:613px;top:111px;font-size:11px;font-weight:400;color:#000;">0</div>
<div class="t" style="right:529px;top:111px;font-size:11px;font-weight:400;color:#000;">0</div>
<div class="t" style="right:466px;top:111px;font-size:11px;font-weight:400;color:#000;">0</div>
<div class="t" style="right:366px;top:111px;font-size:11px;font-weight:400;color:#000;">0</div>
<div class="t" style="right:282px;top:111px;font-size:11px;font-weight:400;color:#000;">0</div>
<div class="t" style="right:215px;top:111px;font-size:11px;font-weight:400;color:#000;">0</div>
<div class="t" style="right:111px;top:111px;font-size:11px;font-weight:400;color:#000;">0</div>
<div class="t" style="right:23px;top:111px;font-size:11px;font-weight:400;color:#000;">0</div>
<div class="b" style="left:35px;top:147px;width:1528px;height:1px;background:#d9d0a6"></div>
<div class="t" style="left:38px;top:132px;font-size:11px;font-weight:400;color:#000;">АО &quot;Ли<span style="letter-spacing:1px">...</span></div>
<div class="t" style="left:96px;top:132px;font-size:11px;font-weight:400;color:#000;">31.03.2015</div>
<div class="t" style="left:188px;top:132px;font-size:11px;font-weight:400;color:#000;">31.03.2015</div>
<div class="t" style="left:255px;top:132px;font-size:11px;font-weight:400;color:#000;">TEST</div>
<div class="t" style="left:307px;top:132px;font-size:11px;font-weight:400;color:#000;">15:01:00</div>
<div class="t" style="right:1095px;top:132px;font-size:11px;font-weight:400;color:#000;">3</div>
<div class="t" style="left:473px;top:132px;font-size:10.6px;font-weight:400;color:#000;">K888KK96</div>
<div class="t" style="right:960px;top:132px;font-size:11px;font-weight:400;color:#000;">0</div>
<div class="t" style="right:860px;top:132px;font-size:11px;font-weight:400;color:#000;">0</div>
<div class="t" style="right:776px;top:132px;font-size:11px;font-weight:400;color:#000;">0</div>
<div class="t" style="right:713px;top:132px;font-size:11px;font-weight:400;color:#000;">0</div>
<div class="t" style="right:613px;top:132px;font-size:11px;font-weight:400;color:#000;">0</div>
<div class="t" style="right:529px;top:132px;font-size:11px;font-weight:400;color:#000;">0</div>
<div class="t" style="right:466px;top:132px;font-size:11px;font-weight:400;color:#000;">0</div>
<div class="t" style="right:366px;top:132px;font-size:11px;font-weight:400;color:#000;">0</div>
<div class="t" style="right:282px;top:132px;font-size:11px;font-weight:400;color:#000;">0</div>
<div class="t" style="right:215px;top:132px;font-size:11px;font-weight:400;color:#000;">0</div>
<div class="t" style="right:111px;top:132px;font-size:11px;font-weight:400;color:#000;">0</div>
<div class="t" style="right:23px;top:132px;font-size:11px;font-weight:400;color:#000;">0</div>
<div class="b" style="left:35px;top:168px;width:1528px;height:1px;background:#d9d0a6"></div>
<div class="t" style="left:38px;top:153px;font-size:11px;font-weight:400;color:#000;">АО &quot;Ли<span style="letter-spacing:1px">...</span></div>
<div class="t" style="left:96px;top:153px;font-size:11px;font-weight:400;color:#000;">31.03.2015</div>
<div class="t" style="left:188px;top:153px;font-size:11px;font-weight:400;color:#000;">31.03.2015</div>
<div class="t" style="left:255px;top:153px;font-size:11px;font-weight:400;color:#000;">TEST</div>
<div class="t" style="left:307px;top:153px;font-size:11px;font-weight:400;color:#000;">15:02:51</div>
<div class="t" style="right:1095px;top:153px;font-size:11px;font-weight:400;color:#000;">0</div>
<div class="t" style="left:473px;top:153px;font-size:10.6px;font-weight:400;color:#000;">K888KK96</div>
<div class="t" style="right:960px;top:153px;font-size:11px;font-weight:400;color:#000;">0</div>
<div class="t" style="right:860px;top:153px;font-size:11px;font-weight:400;color:#000;">0</div>
<div class="t" style="right:776px;top:153px;font-size:11px;font-weight:400;color:#000;">0</div>
<div class="t" style="right:713px;top:153px;font-size:11px;font-weight:400;color:#000;">0</div>
<div class="t" style="right:613px;top:153px;font-size:11px;font-weight:400;color:#000;">0</div>
<div class="t" style="right:529px;top:153px;font-size:11px;font-weight:400;color:#000;">0</div>
<div class="t" style="right:466px;top:153px;font-size:11px;font-weight:400;color:#000;">0</div>
<div class="t" style="right:366px;top:153px;font-size:11px;font-weight:400;color:#000;">0</div>
<div class="t" style="right:282px;top:153px;font-size:11px;font-weight:400;color:#000;">0</div>
<div class="t" style="right:215px;top:153px;font-size:11px;font-weight:400;color:#000;">0</div>
<div class="t" style="right:111px;top:153px;font-size:11px;font-weight:400;color:#000;">20</div>
<div class="t" style="right:23px;top:153px;font-size:11px;font-weight:400;color:#000;">-20</div>
<div class="b" style="left:35px;top:189px;width:1528px;height:1px;background:#d9d0a6"></div>
<div class="t" style="left:38px;top:174px;font-size:11px;font-weight:400;color:#000;">АО &quot;Ли<span style="letter-spacing:1px">...</span></div>
<div class="t" style="left:96px;top:174px;font-size:11px;font-weight:400;color:#000;">31.03.2015</div>
<div class="t" style="left:188px;top:174px;font-size:11px;font-weight:400;color:#000;">31.03.2015</div>
<div class="t" style="left:255px;top:174px;font-size:11px;font-weight:400;color:#000;">TEST</div>
<div class="t" style="left:307px;top:174px;font-size:11px;font-weight:400;color:#000;">15:03:52</div>
<div class="t" style="right:1095px;top:174px;font-size:11px;font-weight:400;color:#000;">0</div>
<div class="t" style="left:473px;top:174px;font-size:10.6px;font-weight:400;color:#000;">K888KK96</div>
<div class="t" style="right:960px;top:174px;font-size:11px;font-weight:400;color:#000;">0</div>
<div class="t" style="right:860px;top:174px;font-size:11px;font-weight:400;color:#000;">150</div>
<div class="t" style="right:776px;top:174px;font-size:11px;font-weight:400;color:#000;">-150</div>
<div class="t" style="right:713px;top:174px;font-size:11px;font-weight:400;color:#000;">0</div>
<div class="t" style="right:613px;top:174px;font-size:11px;font-weight:400;color:#000;">0</div>
<div class="t" style="right:529px;top:174px;font-size:11px;font-weight:400;color:#000;">0</div>
<div class="t" style="right:466px;top:174px;font-size:11px;font-weight:400;color:#000;">0</div>
<div class="t" style="right:366px;top:174px;font-size:11px;font-weight:400;color:#000;">0</div>
<div class="t" style="right:282px;top:174px;font-size:11px;font-weight:400;color:#000;">0</div>
<div class="t" style="right:215px;top:174px;font-size:11px;font-weight:400;color:#000;">0</div>
<div class="t" style="right:111px;top:174px;font-size:11px;font-weight:400;color:#000;">0</div>
<div class="t" style="right:23px;top:174px;font-size:11px;font-weight:400;color:#000;">0</div>
<div class="b" style="left:35px;top:210px;width:1528px;height:1px;background:#d9d0a6"></div>
<div class="t" style="left:38px;top:195px;font-size:11px;font-weight:400;color:#000;">АО &quot;Ли<span style="letter-spacing:1px">...</span></div>
<div class="t" style="left:96px;top:195px;font-size:11px;font-weight:400;color:#000;">31.03.2015</div>
<div class="t" style="left:188px;top:195px;font-size:11px;font-weight:400;color:#000;">31.03.2015</div>
<div class="t" style="left:255px;top:195px;font-size:11px;font-weight:400;color:#000;">TEST</div>
<div class="t" style="left:307px;top:195px;font-size:11px;font-weight:400;color:#000;">15:04:41</div>
<div class="t" style="right:1095px;top:195px;font-size:11px;font-weight:400;color:#000;">0</div>
<div class="t" style="left:473px;top:195px;font-size:10.6px;font-weight:400;color:#000;">K888KK96</div>
<div class="t" style="right:960px;top:195px;font-size:11px;font-weight:400;color:#000;">0</div>
<div class="t" style="right:860px;top:195px;font-size:11px;font-weight:400;color:#000;">550</div>
<div class="t" style="right:776px;top:195px;font-size:11px;font-weight:400;color:#000;">-550</div>
<div class="t" style="right:713px;top:195px;font-size:11px;font-weight:400;color:#000;">0</div>
<div class="t" style="right:613px;top:195px;font-size:11px;font-weight:400;color:#000;">0</div>
<div class="t" style="right:529px;top:195px;font-size:11px;font-weight:400;color:#000;">0</div>
<div class="t" style="right:466px;top:195px;font-size:11px;font-weight:400;color:#000;">0</div>
<div class="t" style="right:366px;top:195px;font-size:11px;font-weight:400;color:#000;">0</div>
<div class="t" style="right:282px;top:195px;font-size:11px;font-weight:400;color:#000;">0</div>
<div class="t" style="right:215px;top:195px;font-size:11px;font-weight:400;color:#000;">0</div>
<div class="t" style="right:111px;top:195px;font-size:11px;font-weight:400;color:#000;">0</div>
<div class="t" style="right:23px;top:195px;font-size:11px;font-weight:400;color:#000;">0</div>
<div class="b" style="left:35px;top:231px;width:1528px;height:1px;background:#d9d0a6"></div>
<div class="t" style="left:38px;top:216px;font-size:11px;font-weight:400;color:#000;">АО &quot;Ли<span style="letter-spacing:1px">...</span></div>
<div class="t" style="left:96px;top:216px;font-size:11px;font-weight:400;color:#000;">31.03.2015</div>
<div class="t" style="left:188px;top:216px;font-size:11px;font-weight:400;color:#000;">31.03.2015</div>
<div class="t" style="left:255px;top:216px;font-size:11px;font-weight:400;color:#000;">TEST</div>
<div class="t" style="left:307px;top:216px;font-size:11px;font-weight:400;color:#000;">15:06:42</div>
<div class="t" style="right:1095px;top:216px;font-size:11px;font-weight:400;color:#000;">0</div>
<div class="t" style="left:473px;top:216px;font-size:10.6px;font-weight:400;color:#000;">K888KK96</div>
<div class="t" style="right:960px;top:216px;font-size:11px;font-weight:400;color:#000;">0</div>
<div class="t" style="right:860px;top:216px;font-size:11px;font-weight:400;color:#000;">550</div>
<div class="t" style="right:776px;top:216px;font-size:11px;font-weight:400;color:#000;">-550</div>
<div class="t" style="right:713px;top:216px;font-size:11px;font-weight:400;color:#000;">0</div>
<div class="t" style="right:613px;top:216px;font-size:11px;font-weight:400;color:#000;">0</div>
<div class="t" style="right:529px;top:216px;font-size:11px;font-weight:400;color:#000;">0</div>
<div class="t" style="right:466px;top:216px;font-size:11px;font-weight:400;color:#000;">0</div>
<div class="t" style="right:366px;top:216px;font-size:11px;font-weight:400;color:#000;">0</div>
<div class="t" style="right:282px;top:216px;font-size:11px;font-weight:400;color:#000;">0</div>
<div class="t" style="right:215px;top:216px;font-size:11px;font-weight:400;color:#000;">0</div>
<div class="t" style="right:111px;top:216px;font-size:11px;font-weight:400;color:#000;">0</div>
<div class="t" style="right:23px;top:216px;font-size:11px;font-weight:400;color:#000;">0</div>
<div class="b" style="left:35px;top:252px;width:1528px;height:1px;background:#d9d0a6"></div>
<div class="t" style="left:38px;top:237px;font-size:11px;font-weight:400;color:#000;">АО &quot;Ли<span style="letter-spacing:1px">...</span></div>
<div class="t" style="left:96px;top:237px;font-size:11px;font-weight:400;color:#000;">31.03.2015</div>
<div class="t" style="left:188px;top:237px;font-size:11px;font-weight:400;color:#000;">31.03.2015</div>
<div class="t" style="left:255px;top:237px;font-size:11px;font-weight:400;color:#000;">TEST</div>
<div class="t" style="left:307px;top:237px;font-size:11px;font-weight:400;color:#000;">15:07:17</div>
<div class="t" style="right:1095px;top:237px;font-size:11px;font-weight:400;color:#000;">0</div>
<div class="t" style="left:473px;top:237px;font-size:10.6px;font-weight:400;color:#000;">K888KK96</div>
<div class="t" style="right:960px;top:237px;font-size:11px;font-weight:400;color:#000;">0</div>
<div class="t" style="right:860px;top:237px;font-size:11px;font-weight:400;color:#000;">0</div>
<div class="t" style="right:776px;top:237px;font-size:11px;font-weight:400;color:#000;">0</div>
<div class="t" style="right:713px;top:237px;font-size:11px;font-weight:400;color:#000;">0</div>
<div class="t" style="right:613px;top:237px;font-size:11px;font-weight:400;color:#000;">550</div>
<div class="t" style="right:529px;top:237px;font-size:11px;font-weight:400;color:#000;">-550</div>
<div class="t" style="right:466px;top:237px;font-size:11px;font-weight:400;color:#000;">0</div>
<div class="t" style="right:366px;top:237px;font-size:11px;font-weight:400;color:#000;">0</div>
<div class="t" style="right:282px;top:237px;font-size:11px;font-weight:400;color:#000;">0</div>
<div class="t" style="right:215px;top:237px;font-size:11px;font-weight:400;color:#000;">0</div>
<div class="t" style="right:111px;top:237px;font-size:11px;font-weight:400;color:#000;">0</div>
<div class="t" style="right:23px;top:237px;font-size:11px;font-weight:400;color:#000;">0</div>
<div class="b" style="left:35px;top:273px;width:1528px;height:1px;background:#d9d0a6"></div>
<div class="t" style="left:38px;top:258px;font-size:11px;font-weight:400;color:#000;">АО &quot;Ли<span style="letter-spacing:1px">...</span></div>
<div class="t" style="left:96px;top:258px;font-size:11px;font-weight:400;color:#000;">31.03.2015</div>
<div class="t" style="left:188px;top:258px;font-size:11px;font-weight:400;color:#000;">31.03.2015</div>
<div class="t" style="left:255px;top:258px;font-size:11px;font-weight:400;color:#000;">TEST</div>
<div class="t" style="left:307px;top:258px;font-size:11px;font-weight:400;color:#000;">15:14:00</div>
<div class="t" style="right:1095px;top:258px;font-size:11px;font-weight:400;color:#000;">2</div>
<div class="t" style="left:473px;top:258px;font-size:10.6px;font-weight:400;color:#000;">K888KK96</div>
<div class="t" style="right:960px;top:258px;font-size:11px;font-weight:400;color:#000;">0</div>
<div class="t" style="right:860px;top:258px;font-size:11px;font-weight:400;color:#000;">0</div>
<div class="t" style="right:776px;top:258px;font-size:11px;font-weight:400;color:#000;">0</div>
<div class="t" style="right:713px;top:258px;font-size:11px;font-weight:400;color:#000;">0</div>
<div class="t" style="right:613px;top:258px;font-size:11px;font-weight:400;color:#000;">0</div>
<div class="t" style="right:529px;top:258px;font-size:11px;font-weight:400;color:#000;">0</div>
<div class="t" style="right:466px;top:258px;font-size:11px;font-weight:400;color:#000;">0</div>
<div class="t" style="right:366px;top:258px;font-size:11px;font-weight:400;color:#000;">0</div>
<div class="t" style="right:282px;top:258px;font-size:11px;font-weight:400;color:#000;">0</div>
<div class="t" style="right:215px;top:258px;font-size:11px;font-weight:400;color:#000;">0</div>
<div class="t" style="right:111px;top:258px;font-size:11px;font-weight:400;color:#000;">0</div>
<div class="t" style="right:23px;top:258px;font-size:11px;font-weight:400;color:#000;">0</div>
<div class="b" style="left:35px;top:294px;width:1528px;height:1px;background:#d9d0a6"></div>
<div class="t" style="left:38px;top:279px;font-size:11px;font-weight:400;color:#000;">АО &quot;Ли<span style="letter-spacing:1px">...</span></div>
<div class="t" style="left:96px;top:279px;font-size:11px;font-weight:400;color:#000;">31.03.2015</div>
<div class="t" style="left:188px;top:279px;font-size:11px;font-weight:400;color:#000;">31.03.2015</div>
<div class="t" style="left:255px;top:279px;font-size:11px;font-weight:400;color:#000;">TEST</div>
<div class="t" style="left:307px;top:279px;font-size:11px;font-weight:400;color:#000;">15:42:02</div>
<div class="t" style="right:1095px;top:279px;font-size:11px;font-weight:400;color:#000;">1</div>
<div class="t" style="left:473px;top:279px;font-size:10.6px;font-weight:400;color:#000;">K888KK96</div>
<div class="t" style="right:960px;top:279px;font-size:11px;font-weight:400;color:#000;">0</div>
<div class="t" style="right:860px;top:279px;font-size:11px;font-weight:400;color:#000;">0</div>
<div class="t" style="right:776px;top:279px;font-size:11px;font-weight:400;color:#000;">0</div>
<div class="t" style="right:713px;top:279px;font-size:11px;font-weight:400;color:#000;">0</div>
<div class="t" style="right:613px;top:279px;font-size:11px;font-weight:400;color:#000;">0</div>
<div class="t" style="right:529px;top:279px;font-size:11px;font-weight:400;color:#000;">0</div>
<div class="t" style="right:466px;top:279px;font-size:11px;font-weight:400;color:#000;">0</div>
<div class="t" style="right:366px;top:279px;font-size:11px;font-weight:400;color:#000;">0</div>
<div class="t" style="right:282px;top:279px;font-size:11px;font-weight:400;color:#000;">0</div>
<div class="t" style="right:215px;top:279px;font-size:11px;font-weight:400;color:#000;">0</div>
<div class="t" style="right:111px;top:279px;font-size:11px;font-weight:400;color:#000;">0</div>
<div class="t" style="right:23px;top:279px;font-size:11px;font-weight:400;color:#000;">0</div>
<div class="b" style="left:35px;top:315px;width:1528px;height:1px;background:#d9d0a6"></div>
<div class="t" style="left:38px;top:300px;font-size:11px;font-weight:400;color:#000;">АО &quot;Ли<span style="letter-spacing:1px">...</span></div>
<div class="t" style="left:96px;top:300px;font-size:11px;font-weight:400;color:#000;">31.03.2015</div>
<div class="t" style="left:188px;top:300px;font-size:11px;font-weight:400;color:#000;">31.03.2015</div>
<div class="t" style="left:255px;top:300px;font-size:11px;font-weight:400;color:#000;">TEST</div>
<div class="t" style="left:307px;top:300px;font-size:11px;font-weight:400;color:#000;">15:50:36</div>
<div class="t" style="right:1095px;top:300px;font-size:11px;font-weight:400;color:#000;">1</div>
<div class="t" style="left:473px;top:300px;font-size:10.6px;font-weight:400;color:#000;">K888KK96</div>
<div class="t" style="right:960px;top:300px;font-size:11px;font-weight:400;color:#000;">0</div>
<div class="t" style="right:860px;top:300px;font-size:11px;font-weight:400;color:#000;">0</div>
<div class="t" style="right:776px;top:300px;font-size:11px;font-weight:400;color:#000;">0</div>
<div class="t" style="right:713px;top:300px;font-size:11px;font-weight:400;color:#000;">0</div>
<div class="t" style="right:613px;top:300px;font-size:11px;font-weight:400;color:#000;">0</div>
<div class="t" style="right:529px;top:300px;font-size:11px;font-weight:400;color:#000;">0</div>
<div class="t" style="right:466px;top:300px;font-size:11px;font-weight:400;color:#000;">0</div>
<div class="t" style="right:366px;top:300px;font-size:11px;font-weight:400;color:#000;">0</div>
<div class="t" style="right:282px;top:300px;font-size:11px;font-weight:400;color:#000;">0</div>
<div class="t" style="right:215px;top:300px;font-size:11px;font-weight:400;color:#000;">0</div>
<div class="t" style="right:111px;top:300px;font-size:11px;font-weight:400;color:#000;">0</div>
<div class="t" style="right:23px;top:300px;font-size:11px;font-weight:400;color:#000;">0</div>
<div class="b" style="left:35px;top:336px;width:1528px;height:1px;background:#d9d0a6"></div>
<div class="t" style="left:38px;top:321px;font-size:11px;font-weight:400;color:#000;">АО &quot;Ли<span style="letter-spacing:1px">...</span></div>
<div class="t" style="left:96px;top:321px;font-size:11px;font-weight:400;color:#000;">31.03.2015</div>
<div class="t" style="left:188px;top:321px;font-size:11px;font-weight:400;color:#000;">31.03.2015</div>
<div class="t" style="left:255px;top:321px;font-size:11px;font-weight:400;color:#000;">TEST</div>
<div class="t" style="left:307px;top:321px;font-size:11px;font-weight:400;color:#000;">15:56:57</div>
<div class="t" style="right:1095px;top:321px;font-size:11px;font-weight:400;color:#000;">2</div>
<div class="t" style="left:473px;top:321px;font-size:10.6px;font-weight:400;color:#000;">K888KK96</div>
<div class="t" style="right:960px;top:321px;font-size:11px;font-weight:400;color:#000;">0</div>
<div class="t" style="right:860px;top:321px;font-size:11px;font-weight:400;color:#000;">0</div>
<div class="t" style="right:776px;top:321px;font-size:11px;font-weight:400;color:#000;">0</div>
<div class="t" style="right:713px;top:321px;font-size:11px;font-weight:400;color:#000;">0</div>
<div class="t" style="right:613px;top:321px;font-size:11px;font-weight:400;color:#000;">0</div>
<div class="t" style="right:529px;top:321px;font-size:11px;font-weight:400;color:#000;">0</div>
<div class="t" style="right:466px;top:321px;font-size:11px;font-weight:400;color:#000;">0</div>
<div class="t" style="right:366px;top:321px;font-size:11px;font-weight:400;color:#000;">0</div>
<div class="t" style="right:282px;top:321px;font-size:11px;font-weight:400;color:#000;">0</div>
<div class="t" style="right:215px;top:321px;font-size:11px;font-weight:400;color:#000;">0</div>
<div class="t" style="right:111px;top:321px;font-size:11px;font-weight:400;color:#000;">0</div>
<div class="t" style="right:23px;top:321px;font-size:11px;font-weight:400;color:#000;">0</div>
<div class="b" style="left:35px;top:357px;width:1528px;height:1px;background:#d9d0a6"></div>
<div class="t" style="left:38px;top:342px;font-size:11px;font-weight:400;color:#000;">АО &quot;Ли<span style="letter-spacing:1px">...</span></div>
<div class="t" style="left:96px;top:342px;font-size:11px;font-weight:400;color:#000;">31.03.2015</div>
<div class="t" style="left:188px;top:342px;font-size:11px;font-weight:400;color:#000;">31.03.2015</div>
<div class="t" style="left:255px;top:342px;font-size:11px;font-weight:400;color:#000;">TEST</div>
<div class="t" style="left:307px;top:342px;font-size:11px;font-weight:400;color:#000;">16:03:32</div>
<div class="t" style="right:1095px;top:342px;font-size:11px;font-weight:400;color:#000;">2</div>
<div class="t" style="left:473px;top:342px;font-size:10.6px;font-weight:400;color:#000;">K888KK96</div>
<div class="t" style="right:960px;top:342px;font-size:11px;font-weight:400;color:#000;">0</div>
<div class="t" style="right:860px;top:342px;font-size:11px;font-weight:400;color:#000;">0</div>
<div class="t" style="right:776px;top:342px;font-size:11px;font-weight:400;color:#000;">0</div>
<div class="t" style="right:713px;top:342px;font-size:11px;font-weight:400;color:#000;">0</div>
<div class="t" style="right:613px;top:342px;font-size:11px;font-weight:400;color:#000;">0</div>
<div class="t" style="right:529px;top:342px;font-size:11px;font-weight:400;color:#000;">0</div>
<div class="t" style="right:466px;top:342px;font-size:11px;font-weight:400;color:#000;">0</div>
<div class="t" style="right:366px;top:342px;font-size:11px;font-weight:400;color:#000;">0</div>
<div class="t" style="right:282px;top:342px;font-size:11px;font-weight:400;color:#000;">0</div>
<div class="t" style="right:215px;top:342px;font-size:11px;font-weight:400;color:#000;">0</div>
<div class="t" style="right:111px;top:342px;font-size:11px;font-weight:400;color:#000;">0</div>
<div class="t" style="right:23px;top:342px;font-size:11px;font-weight:400;color:#000;">0</div>
<div class="b" style="left:35px;top:378px;width:1528px;height:1px;background:#d9d0a6"></div>
<div class="t" style="left:38px;top:363px;font-size:11px;font-weight:400;color:#000;">АО &quot;Ли<span style="letter-spacing:1px">...</span></div>
<div class="t" style="left:96px;top:363px;font-size:11px;font-weight:400;color:#000;">31.03.2015</div>
<div class="t" style="left:188px;top:363px;font-size:11px;font-weight:400;color:#000;">31.03.2015</div>
<div class="t" style="left:255px;top:363px;font-size:11px;font-weight:400;color:#000;">TEST</div>
<div class="t" style="left:307px;top:363px;font-size:11px;font-weight:400;color:#000;">16:11:00</div>
<div class="t" style="right:1095px;top:363px;font-size:11px;font-weight:400;color:#000;">1</div>
<div class="t" style="left:473px;top:363px;font-size:10.6px;font-weight:400;color:#000;">K888KK96</div>
<div class="t" style="right:960px;top:363px;font-size:11px;font-weight:400;color:#000;">0</div>
<div class="t" style="right:860px;top:363px;font-size:11px;font-weight:400;color:#000;">0</div>
<div class="t" style="right:776px;top:363px;font-size:11px;font-weight:400;color:#000;">0</div>
<div class="t" style="right:713px;top:363px;font-size:11px;font-weight:400;color:#000;">0</div>
<div class="t" style="right:613px;top:363px;font-size:11px;font-weight:400;color:#000;">0</div>
<div class="t" style="right:529px;top:363px;font-size:11px;font-weight:400;color:#000;">0</div>
<div class="t" style="right:466px;top:363px;font-size:11px;font-weight:400;color:#000;">0</div>
<div class="t" style="right:366px;top:363px;font-size:11px;font-weight:400;color:#000;">0</div>
<div class="t" style="right:282px;top:363px;font-size:11px;font-weight:400;color:#000;">0</div>
<div class="t" style="right:215px;top:363px;font-size:11px;font-weight:400;color:#000;">0</div>
<div class="t" style="right:111px;top:363px;font-size:11px;font-weight:400;color:#000;">0</div>
<div class="t" style="right:23px;top:363px;font-size:11px;font-weight:400;color:#000;">0</div>
<div class="b" style="left:35px;top:399px;width:1528px;height:1px;background:#d9d0a6"></div>
<div class="t" style="left:38px;top:384px;font-size:11px;font-weight:400;color:#000;">АО &quot;Ли<span style="letter-spacing:1px">...</span></div>
<div class="t" style="left:96px;top:384px;font-size:11px;font-weight:400;color:#000;">31.03.2015</div>
<div class="t" style="left:188px;top:384px;font-size:11px;font-weight:400;color:#000;">31.03.2015</div>
<div class="t" style="left:255px;top:384px;font-size:11px;font-weight:400;color:#000;">TEST</div>
<div class="t" style="left:307px;top:384px;font-size:11px;font-weight:400;color:#000;">16:24:39</div>
<div class="t" style="right:1095px;top:384px;font-size:11px;font-weight:400;color:#000;">2</div>
<div class="t" style="left:473px;top:384px;font-size:10.6px;font-weight:400;color:#000;">K888KK96</div>
<div class="t" style="right:960px;top:384px;font-size:11px;font-weight:400;color:#000;">0</div>
<div class="t" style="right:860px;top:384px;font-size:11px;font-weight:400;color:#000;">0</div>
<div class="t" style="right:776px;top:384px;font-size:11px;font-weight:400;color:#000;">0</div>
<div class="t" style="right:713px;top:384px;font-size:11px;font-weight:400;color:#000;">0</div>
<div class="t" style="right:613px;top:384px;font-size:11px;font-weight:400;color:#000;">0</div>
<div class="t" style="right:529px;top:384px;font-size:11px;font-weight:400;color:#000;">0</div>
<div class="t" style="right:466px;top:384px;font-size:11px;font-weight:400;color:#000;">0</div>
<div class="t" style="right:366px;top:384px;font-size:11px;font-weight:400;color:#000;">0</div>
<div class="t" style="right:282px;top:384px;font-size:11px;font-weight:400;color:#000;">0</div>
<div class="t" style="right:215px;top:384px;font-size:11px;font-weight:400;color:#000;">0</div>
<div class="t" style="right:111px;top:384px;font-size:11px;font-weight:400;color:#000;">0</div>
<div class="t" style="right:23px;top:384px;font-size:11px;font-weight:400;color:#000;">0</div>
<div class="b" style="left:35px;top:420px;width:1528px;height:1px;background:#d9d0a6"></div>
<div class="t" style="left:38px;top:405px;font-size:11px;font-weight:400;color:#000;">АО &quot;Ли<span style="letter-spacing:1px">...</span></div>
<div class="t" style="left:96px;top:405px;font-size:11px;font-weight:400;color:#000;">01.04.2015</div>
<div class="t" style="left:188px;top:405px;font-size:11px;font-weight:400;color:#000;">01.04.2015</div>
<div class="t" style="left:255px;top:405px;font-size:11px;font-weight:400;color:#000;">M300</div>
<div class="t" style="left:307px;top:405px;font-size:11px;font-weight:400;color:#000;">13:46:01</div>
<div class="t" style="right:1095px;top:405px;font-size:11px;font-weight:400;color:#000;">0</div>
<div class="t" style="left:473px;top:405px;font-size:10.6px;font-weight:400;color:#000;">K888KK96</div>
<div class="t" style="right:960px;top:405px;font-size:11px;font-weight:400;color:#000;">0</div>
<div class="t" style="right:860px;top:405px;font-size:11px;font-weight:400;color:#000;">1150</div>
<div class="t" style="right:776px;top:405px;font-size:11px;font-weight:400;color:#000;">-1150</div>
<div class="t" style="right:713px;top:405px;font-size:11px;font-weight:400;color:#000;">0</div>
<div class="t" style="right:613px;top:405px;font-size:11px;font-weight:400;color:#000;">0</div>
<div class="t" style="right:529px;top:405px;font-size:11px;font-weight:400;color:#000;">0</div>
<div class="t" style="right:466px;top:405px;font-size:11px;font-weight:400;color:#000;">0</div>
<div class="t" style="right:366px;top:405px;font-size:11px;font-weight:400;color:#000;">0</div>
<div class="t" style="right:282px;top:405px;font-size:11px;font-weight:400;color:#000;">0</div>
<div class="t" style="right:215px;top:405px;font-size:11px;font-weight:400;color:#000;">403</div>
<div class="t" style="right:111px;top:405px;font-size:11px;font-weight:400;color:#000;">410</div>
<div class="t" style="right:23px;top:405px;font-size:11px;font-weight:400;color:#000;">-7</div>
<div class="b" style="left:35px;top:441px;width:1528px;height:1px;background:#d9d0a6"></div>
<div class="t" style="left:38px;top:426px;font-size:11px;font-weight:400;color:#000;">АО &quot;Ли<span style="letter-spacing:1px">...</span></div>
<div class="t" style="left:96px;top:426px;font-size:11px;font-weight:400;color:#000;">01.04.2015</div>
<div class="t" style="left:188px;top:426px;font-size:11px;font-weight:400;color:#000;">01.04.2015</div>
<div class="t" style="left:255px;top:426px;font-size:11px;font-weight:400;color:#000;">M300</div>
<div class="t" style="left:307px;top:426px;font-size:11px;font-weight:400;color:#000;">13:46:17</div>
<div class="t" style="right:1095px;top:426px;font-size:11px;font-weight:400;color:#000;">0</div>
<div class="t" style="left:473px;top:426px;font-size:10.6px;font-weight:400;color:#000;">K888KK96</div>
<div class="t" style="right:960px;top:426px;font-size:11px;font-weight:400;color:#000;">0</div>
<div class="t" style="right:860px;top:426px;font-size:11px;font-weight:400;color:#000;">0</div>
<div class="t" style="right:776px;top:426px;font-size:11px;font-weight:400;color:#000;">0</div>
<div class="t" style="right:713px;top:426px;font-size:11px;font-weight:400;color:#000;">0</div>
<div class="t" style="right:613px;top:426px;font-size:11px;font-weight:400;color:#000;">0</div>
<div class="t" style="right:529px;top:426px;font-size:11px;font-weight:400;color:#000;">0</div>
<div class="t" style="right:466px;top:426px;font-size:11px;font-weight:400;color:#000;">0</div>
<div class="t" style="right:366px;top:426px;font-size:11px;font-weight:400;color:#000;">0</div>
<div class="t" style="right:282px;top:426px;font-size:11px;font-weight:400;color:#000;">0</div>
<div class="t" style="right:215px;top:426px;font-size:11px;font-weight:400;color:#000;">0</div>
<div class="t" style="right:111px;top:426px;font-size:11px;font-weight:400;color:#000;">0</div>
<div class="t" style="right:23px;top:426px;font-size:11px;font-weight:400;color:#000;">0</div>
<div class="b" style="left:35px;top:462px;width:1528px;height:1px;background:#d9d0a6"></div>
<div class="t" style="left:38px;top:447px;font-size:11px;font-weight:400;color:#000;">АО &quot;Ли<span style="letter-spacing:1px">...</span></div>
<div class="t" style="left:96px;top:447px;font-size:11px;font-weight:400;color:#000;">01.04.2015</div>
<div class="t" style="left:188px;top:447px;font-size:11px;font-weight:400;color:#000;">01.04.2015</div>
<div class="t" style="left:255px;top:447px;font-size:11px;font-weight:400;color:#000;">M300</div>
<div class="t" style="left:307px;top:447px;font-size:11px;font-weight:400;color:#000;">13:59:47</div>
<div class="t" style="right:1095px;top:447px;font-size:11px;font-weight:400;color:#000;">1</div>
<div class="t" style="left:473px;top:447px;font-size:10.6px;font-weight:400;color:#000;">K888KK96</div>
<div class="t" style="right:960px;top:447px;font-size:11px;font-weight:400;color:#000;">727</div>
<div class="t" style="right:860px;top:447px;font-size:11px;font-weight:400;color:#000;">1150</div>
<div class="t" style="right:776px;top:447px;font-size:11px;font-weight:400;color:#000;">-423</div>
<div class="t" style="right:713px;top:447px;font-size:11px;font-weight:400;color:#000;">704</div>
<div class="t" style="right:613px;top:447px;font-size:11px;font-weight:400;color:#000;">690</div>
<div class="t" style="right:529px;top:447px;font-size:11px;font-weight:400;color:#000;">14</div>
<div class="t" style="right:466px;top:447px;font-size:11px;font-weight:400;color:#000;">0</div>
<div class="t" style="right:366px;top:447px;font-size:11px;font-weight:400;color:#000;">0</div>
<div class="t" style="right:282px;top:447px;font-size:11px;font-weight:400;color:#000;">0</div>
<div class="t" style="right:215px;top:447px;font-size:11px;font-weight:400;color:#000;">401</div>
<div class="t" style="right:111px;top:447px;font-size:11px;font-weight:400;color:#000;">410</div>
<div class="t" style="right:23px;top:447px;font-size:11px;font-weight:400;color:#000;">-9</div>
<div class="b" style="left:35px;top:483px;width:1528px;height:1px;background:#d9d0a6"></div>
<div class="t" style="left:38px;top:468px;font-size:11px;font-weight:400;color:#000;">АО &quot;Ли<span style="letter-spacing:1px">...</span></div>
<div class="t" style="left:96px;top:468px;font-size:11px;font-weight:400;color:#000;">01.04.2015</div>
<div class="t" style="left:188px;top:468px;font-size:11px;font-weight:400;color:#000;">01.04.2015</div>
<div class="t" style="left:255px;top:468px;font-size:11px;font-weight:400;color:#000;">M300</div>
<div class="t" style="left:307px;top:468px;font-size:11px;font-weight:400;color:#000;">14:07:03</div>
<div class="t" style="right:1095px;top:468px;font-size:11px;font-weight:400;color:#000;">1</div>
<div class="t" style="left:473px;top:468px;font-size:10.6px;font-weight:400;color:#000;">K888KK96</div>
<div class="t" style="right:960px;top:468px;font-size:11px;font-weight:400;color:#000;">0</div>
<div class="t" style="right:860px;top:468px;font-size:11px;font-weight:400;color:#000;">0</div>
<div class="t" style="right:776px;top:468px;font-size:11px;font-weight:400;color:#000;">0</div>
<div class="t" style="right:713px;top:468px;font-size:11px;font-weight:400;color:#000;">773</div>
<div class="t" style="right:613px;top:468px;font-size:11px;font-weight:400;color:#000;">790</div>
<div class="t" style="right:529px;top:468px;font-size:11px;font-weight:400;color:#000;">-17</div>
<div class="t" style="right:466px;top:468px;font-size:11px;font-weight:400;color:#000;">1141</div>
<div class="t" style="right:366px;top:468px;font-size:11px;font-weight:400;color:#000;">1100</div>
<div class="t" style="right:282px;top:468px;font-size:11px;font-weight:400;color:#000;">41</div>
<div class="t" style="right:215px;top:468px;font-size:11px;font-weight:400;color:#000;">405</div>
<div class="t" style="right:111px;top:468px;font-size:11px;font-weight:400;color:#000;">410</div>
<div class="t" style="right:23px;top:468px;font-size:11px;font-weight:400;color:#000;">-5</div>
<div class="b" style="left:35px;top:504px;width:1528px;height:1px;background:#d9d0a6"></div>
<div class="t" style="left:38px;top:489px;font-size:11px;font-weight:400;color:#000;">АО &quot;Ли<span style="letter-spacing:1px">...</span></div>
<div class="t" style="left:96px;top:489px;font-size:11px;font-weight:400;color:#000;">01.04.2015</div>
<div class="t" style="left:188px;top:489px;font-size:11px;font-weight:400;color:#000;">01.04.2015</div>
<div class="t" style="left:255px;top:489px;font-size:11px;font-weight:400;color:#000;">M300</div>
<div class="t" style="left:307px;top:489px;font-size:11px;font-weight:400;color:#000;">14:37:40</div>
<div class="t" style="right:1095px;top:489px;font-size:11px;font-weight:400;color:#000;">1</div>
<div class="t" style="left:473px;top:489px;font-size:10.6px;font-weight:400;color:#000;">K888KK96</div>
<div class="t" style="right:960px;top:489px;font-size:11px;font-weight:400;color:#000;">1201</div>
<div class="t" style="right:860px;top:489px;font-size:11px;font-weight:400;color:#000;">1100</div>
<div class="t" style="right:776px;top:489px;font-size:11px;font-weight:400;color:#000;">101</div>
<div class="t" style="right:713px;top:489px;font-size:11px;font-weight:400;color:#000;">783</div>
<div class="t" style="right:613px;top:489px;font-size:11px;font-weight:400;color:#000;">790</div>
<div class="t" style="right:529px;top:489px;font-size:11px;font-weight:400;color:#000;">-7</div>
<div class="t" style="right:466px;top:489px;font-size:11px;font-weight:400;color:#000;">0</div>
<div class="t" style="right:366px;top:489px;font-size:11px;font-weight:400;color:#000;">0</div>
<div class="t" style="right:282px;top:489px;font-size:11px;font-weight:400;color:#000;">0</div>
<div class="t" style="right:215px;top:489px;font-size:11px;font-weight:400;color:#000;">411</div>
<div class="t" style="right:111px;top:489px;font-size:11px;font-weight:400;color:#000;">410</div>
<div class="t" style="right:23px;top:489px;font-size:11px;font-weight:400;color:#000;">1</div>
<div class="b" style="left:35px;top:525px;width:1528px;height:1px;background:#d9d0a6"></div>
<div class="t" style="left:38px;top:510px;font-size:11px;font-weight:400;color:#000;">АО &quot;Ли<span style="letter-spacing:1px">...</span></div>
<div class="t" style="left:96px;top:510px;font-size:11px;font-weight:400;color:#000;">01.04.2015</div>
<div class="t" style="left:188px;top:510px;font-size:11px;font-weight:400;color:#000;">01.04.2015</div>
<div class="t" style="left:255px;top:510px;font-size:11px;font-weight:400;color:#000;">B30F3<span style="letter-spacing:0.8px">...</span></div>
<div class="t" style="left:307px;top:510px;font-size:11px;font-weight:400;color:#000;">15:02:50</div>
<div class="t" style="right:1095px;top:510px;font-size:11px;font-weight:400;color:#000;">0</div>
<div class="t" style="left:473px;top:510px;font-size:10.6px;font-weight:400;color:#000;">K888KK96</div>
<div class="t" style="right:960px;top:510px;font-size:11px;font-weight:400;color:#000;">1076</div>
<div class="t" style="right:860px;top:510px;font-size:11px;font-weight:400;color:#000;">1055</div>
<div class="t" style="right:776px;top:510px;font-size:11px;font-weight:400;color:#000;">21</div>
<div class="t" style="right:713px;top:510px;font-size:11px;font-weight:400;color:#000;">729</div>
<div class="t" style="right:613px;top:510px;font-size:11px;font-weight:400;color:#000;">665</div>
<div class="t" style="right:529px;top:510px;font-size:11px;font-weight:400;color:#000;">64</div>
<div class="t" style="right:466px;top:510px;font-size:11px;font-weight:400;color:#000;">0</div>
<div class="t" style="right:366px;top:510px;font-size:11px;font-weight:400;color:#000;">0</div>
<div class="t" style="right:282px;top:510px;font-size:11px;font-weight:400;color:#000;">0</div>
<div class="t" style="right:215px;top:510px;font-size:11px;font-weight:400;color:#000;">443</div>
<div class="t" style="right:111px;top:510px;font-size:11px;font-weight:400;color:#000;">440</div>
<div class="t" style="right:23px;top:510px;font-size:11px;font-weight:400;color:#000;">3</div>
<div class="b" style="left:92px;top:63px;width:1px;height:460px;background:#d9d0a6"></div>
<div class="b" style="left:184px;top:63px;width:1px;height:460px;background:#d9d0a6"></div>
<div class="b" style="left:251px;top:63px;width:1px;height:460px;background:#d9d0a6"></div>
<div class="b" style="left:302px;top:63px;width:1px;height:460px;background:#d9d0a6"></div>
<div class="b" style="left:419px;top:63px;width:1px;height:460px;background:#d9d0a6"></div>
<div class="b" style="left:470px;top:63px;width:1px;height:460px;background:#d9d0a6"></div>
<div class="b" style="left:543px;top:63px;width:1px;height:460px;background:#d9d0a6"></div>
<div class="b" style="left:606px;top:63px;width:1px;height:460px;background:#d9d0a6"></div>
<div class="b" style="left:706px;top:63px;width:1px;height:460px;background:#d9d0a6"></div>
<div class="b" style="left:790px;top:63px;width:1px;height:460px;background:#d9d0a6"></div>
<div class="b" style="left:853px;top:63px;width:1px;height:460px;background:#d9d0a6"></div>
<div class="b" style="left:953px;top:63px;width:1px;height:460px;background:#d9d0a6"></div>
<div class="b" style="left:1037px;top:63px;width:1px;height:460px;background:#d9d0a6"></div>
<div class="b" style="left:1100px;top:63px;width:1px;height:460px;background:#d9d0a6"></div>
<div class="b" style="left:1200px;top:63px;width:1px;height:460px;background:#d9d0a6"></div>
<div class="b" style="left:1284px;top:63px;width:1px;height:460px;background:#d9d0a6"></div>
<div class="b" style="left:1351px;top:63px;width:1px;height:460px;background:#d9d0a6"></div>
<div class="b" style="left:1455px;top:63px;width:1px;height:460px;background:#d9d0a6"></div>
<div class="b" style="left:1543px;top:63px;width:1px;height:460px;background:#d9d0a6"></div>
<div class="b" style="left:34px;top:63px;width:1px;height:460px;background:#d6cda2"></div>
<div class="b" style="left:0px;top:520px;width:1563px;height:28px;background:linear-gradient(#fdfdfd,#f3f3f3 50%,#e3e3e3);border-top:1px solid #a9a9a9"></div>
<div class="b" style="left:421px;top:522px;width:49px;height:24px;background:linear-gradient(#f4f4f4,#fff 40%,#fff);border:1px solid #d6d6d6;border-top-color:#cfcfcf"></div>
<div class="t" style="right:1096px;top:529px;font-size:11px;font-weight:400;color:#000;">990.1</div>
<div class="b" style="left:545px;top:522px;width:61px;height:24px;background:linear-gradient(#f4f4f4,#fff 40%,#fff);border:1px solid #d6d6d6;border-top-color:#cfcfcf"></div>
<div class="t" style="right:960px;top:529px;font-size:11px;font-weight:400;color:#000;">1045781</div>
<div class="b" style="left:608px;top:522px;width:98px;height:24px;background:linear-gradient(#f4f4f4,#fff 40%,#fff);border:1px solid #d6d6d6;border-top-color:#cfcfcf"></div>
<div class="t" style="right:860px;top:529px;font-size:11px;font-weight:400;color:#000;">1049057</div>
<div class="b" style="left:708px;top:522px;width:82px;height:24px;background:linear-gradient(#f4f4f4,#fff 40%,#fff);border:1px solid #d6d6d6;border-top-color:#cfcfcf"></div>
<div class="t" style="right:776px;top:529px;font-size:11px;font-weight:400;color:#000;">-3276</div>
<div class="b" style="left:792px;top:522px;width:61px;height:24px;background:linear-gradient(#f4f4f4,#fff 40%,#fff);border:1px solid #d6d6d6;border-top-color:#cfcfcf"></div>
<div class="t" style="right:713px;top:529px;font-size:11px;font-weight:400;color:#000;">734690</div>
<div class="b" style="left:855px;top:522px;width:98px;height:24px;background:linear-gradient(#f4f4f4,#fff 40%,#fff);border:1px solid #d6d6d6;border-top-color:#cfcfcf"></div>
<div class="t" style="right:613px;top:529px;font-size:11px;font-weight:400;color:#000;">736662</div>
<div class="b" style="left:955px;top:522px;width:82px;height:24px;background:linear-gradient(#f4f4f4,#fff 40%,#fff);border:1px solid #d6d6d6;border-top-color:#cfcfcf"></div>
<div class="t" style="right:529px;top:529px;font-size:11px;font-weight:400;color:#000;">-1972</div>
<div class="b" style="left:1039px;top:522px;width:61px;height:24px;background:linear-gradient(#f4f4f4,#fff 40%,#fff);border:1px solid #d6d6d6;border-top-color:#cfcfcf"></div>
<div class="t" style="right:466px;top:529px;font-size:11px;font-weight:400;color:#000;">7267</div>
<div class="b" style="left:1102px;top:522px;width:98px;height:24px;background:linear-gradient(#f4f4f4,#fff 40%,#fff);border:1px solid #d6d6d6;border-top-color:#cfcfcf"></div>
<div class="t" style="right:366px;top:529px;font-size:11px;font-weight:400;color:#000;">7300</div>
<div class="b" style="left:1202px;top:522px;width:82px;height:24px;background:linear-gradient(#f4f4f4,#fff 40%,#fff);border:1px solid #d6d6d6;border-top-color:#cfcfcf"></div>
<div class="t" style="right:282px;top:529px;font-size:11px;font-weight:400;color:#000;">-33</div>
<div class="b" style="left:1286px;top:522px;width:65px;height:24px;background:linear-gradient(#f4f4f4,#fff 40%,#fff);border:1px solid #d6d6d6;border-top-color:#cfcfcf"></div>
<div class="t" style="right:215px;top:529px;font-size:11px;font-weight:400;color:#000;">186793</div>
<div class="b" style="left:1353px;top:522px;width:102px;height:24px;background:linear-gradient(#f4f4f4,#fff 40%,#fff);border:1px solid #d6d6d6;border-top-color:#cfcfcf"></div>
<div class="t" style="right:111px;top:529px;font-size:11px;font-weight:400;color:#000;">187110</div>
<div class="b" style="left:1457px;top:522px;width:86px;height:24px;background:linear-gradient(#f4f4f4,#fff 40%,#fff);border:1px solid #d6d6d6;border-top-color:#cfcfcf"></div>
<div class="t" style="right:23px;top:529px;font-size:11px;font-weight:400;color:#000;">-317</div>
<div class="b" style="left:1545px;top:522px;width:16px;height:24px;background:linear-gradient(#f4f4f4,#fff 40%,#fff);border:1px solid #d6d6d6"></div>
<div class="t" style="left:1548px;top:529px;font-size:11px;font-weight:400;color:#000;letter-spacing:0.3px">...</div>
</div>
<div class="b" style="left:5px;top:776px;width:1563px;height:17px;background:#494949;border:1px solid #2c2f32"></div>
<svg style="left:9px;top:779px" width="9" height="12"><path d="M6.5 1 L6.5 10 L1 5.5 Z" fill="#d8d8d8"/></svg>
<div class="b" style="left:23px;top:777px;width:1005px;height:15px;background:linear-gradient(#f0f0f0,#e8e8e8 40%,#d8d8d8 50%,#cdcdcd);border-left:1px solid #fff;border-top:1px solid #fff;border-right:1px solid #2c2f32"></div>
<div class="b" style="left:522px;top:780px;width:1px;height:9px;background:#5a5a5a"></div>
<div class="b" style="left:524px;top:780px;width:1px;height:9px;background:#5a5a5a"></div>
<div class="b" style="left:526px;top:780px;width:1px;height:9px;background:#5a5a5a"></div>
<div class="b" style="left:528px;top:780px;width:1px;height:9px;background:#5a5a5a"></div>
<svg style="left:1557px;top:779px" width="9" height="12"><path d="M1.5 1 L1.5 10 L7 5.5 Z" fill="#d8d8d8"/></svg>
<div class="b" style="left:1568px;top:776px;width:18px;height:18px;background:#e3e3e3"></div>
<div class="b" style="left:0px;top:804px;width:1593px;height:1px;background:#a0a0a0"></div>
<div class="b" style="left:0px;top:805px;width:1593px;height:24px;background:#f0f0f0"></div>
<svg style="left:0;top:809px" width="13" height="16" viewBox="0 0 13 16">
<defs><linearGradient id="wy" x1="0" y1="0" x2="0" y2="1"><stop offset="0" stop-color="#fbe96a"/><stop offset="1" stop-color="#f2c800"/></linearGradient></defs>
<path d="M4 0.6 Q4.3 0 4.8 0.6 L11.8 13.6 Q12 14.5 11 14.5 L-3 14.5 Z" fill="url(#wy)" stroke="#c9a400" stroke-width="0.9"/>
<rect x="3" y="5" width="2.2" height="5" fill="#000"/><rect x="3" y="11.2" width="2.2" height="2" fill="#000"/>
</svg>
<div class="t" style="left:15px;top:812px;font-size:11.6px;font-weight:400;color:#000;">Нет связи</div>
<svg style="left:74px;top:810px" width="11" height="15" viewBox="0 0 11 15">
<defs><linearGradient id="ub" x1="0" y1="0" x2="0" y2="1"><stop offset="0" stop-color="#b9d6f5"/><stop offset="1" stop-color="#6f9fd6"/></linearGradient></defs>
<path d="M1 14 C1 9 2.5 7.8 5.5 7.8 C8.5 7.8 10 9 10 14 Z" fill="url(#ub)"/>
<ellipse cx="5" cy="5" rx="2.8" ry="3.6" fill="#d99a68"/>
<path d="M2.5 3.5 C2.5 0.8 7.5 0.3 8.2 3 L8 6 L7 4 C5.5 2.5 4 2.5 2.5 3.5 Z" fill="#3c3c3c"/>
</svg>
<div class="t" style="left:91px;top:812px;font-size:12.4px;font-weight:400;color:#000;">Admin (Admin)</div>
<div class="t" style="left:181px;top:812px;font-size:11.6px;font-weight:700;color:#000;">Genel Elektronik Otomasyon Tekniği Mühendislik San. ve Tic. Ltd. Şti.</div>
<div class="t" style="left:574px;top:812px;font-size:13px;font-weight:700;color:#8b0000;letter-spacing:0.3px">is kodu</div>
<div class="t" style="left:631px;top:812px;font-size:13.2px;font-weight:700;color:#000080;letter-spacing:0.45px">Ежедневный итог производств:</div>
<div class="t" style="left:862px;top:812px;font-size:13px;font-weight:700;color:#000080;">0</div>
</body></html>
